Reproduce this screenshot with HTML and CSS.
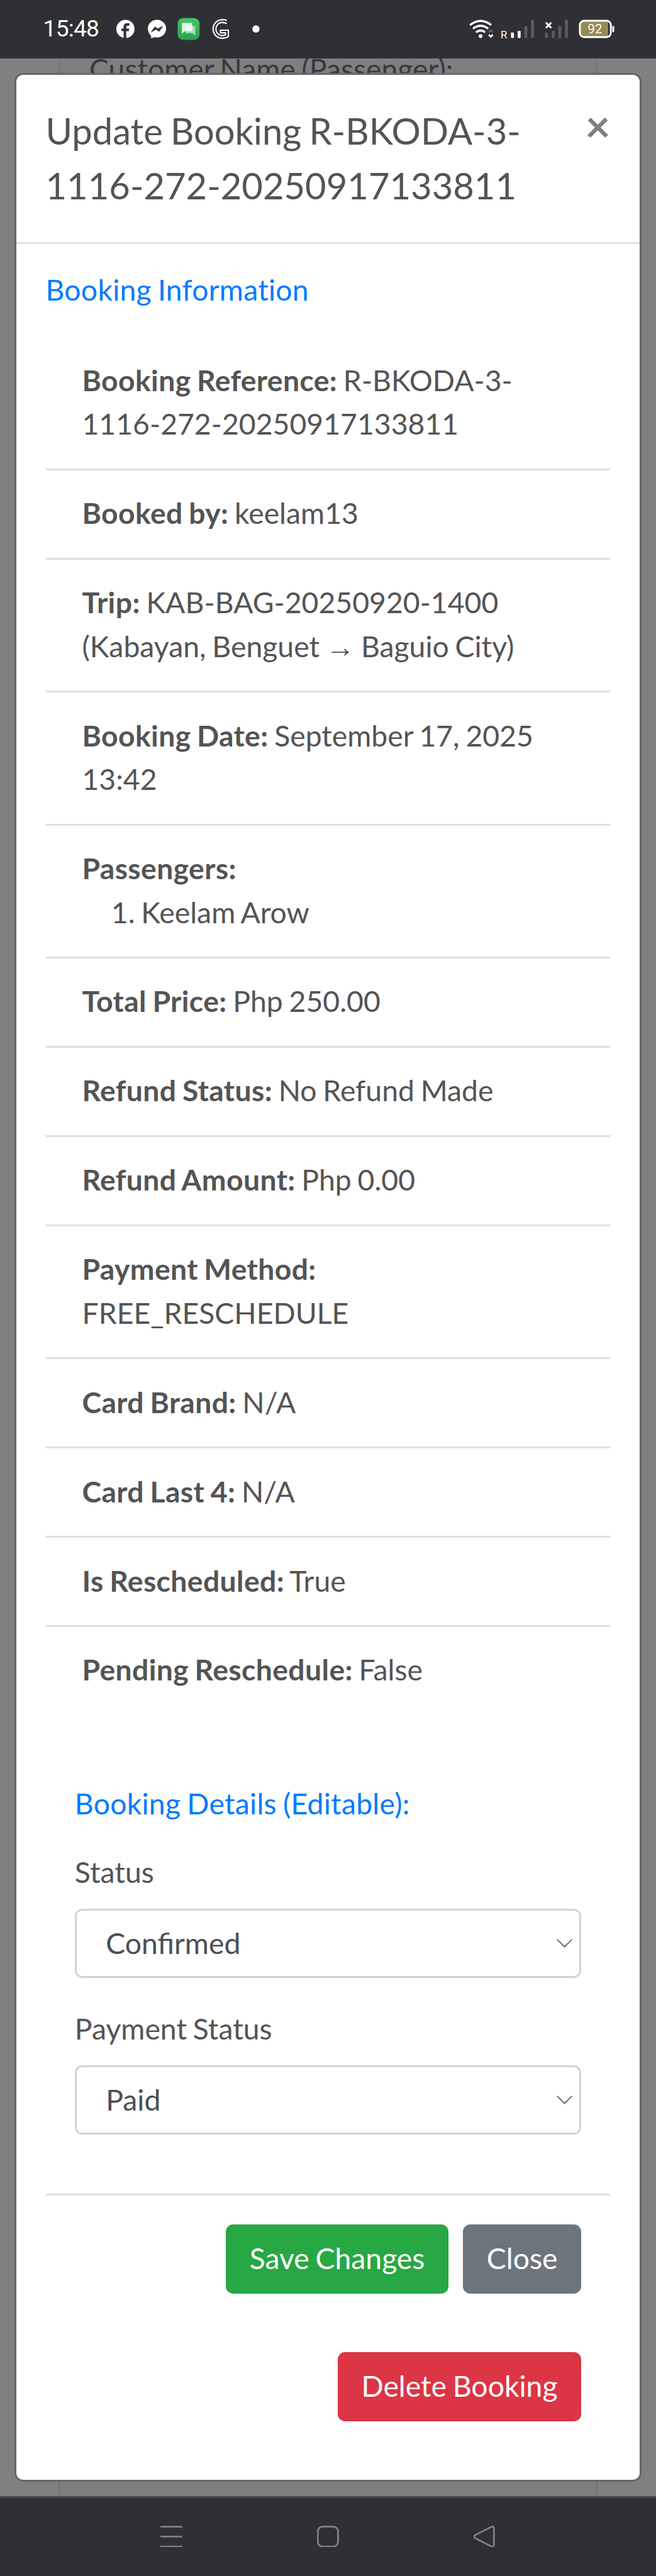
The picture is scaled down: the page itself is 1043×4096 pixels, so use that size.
FILE: index.html
```html
<!DOCTYPE html>
<html lang="en">
<head>
<meta charset="utf-8">
<title>Update Booking</title>
<link rel="stylesheet" href="styles.css">
</head>
<body>
<header class="statusbar">
  <span class="time">15:48</span>
  <svg class="status-left" viewBox="190 20 250 60">
    <defs><linearGradient id="msg" x1="0" y1="0" x2="0" y2="1"><stop offset="0" stop-color="#42c865"/><stop offset="1" stop-color="#2ba24b"/></linearGradient></defs>
    <circle cx="207" cy="48" r="15" fill="#fff"/>
    <path d="M204 64V51.5h-3.5v-4h3.5v-3c0-4 2.300-5.800 5.600-5.800h4v3.800h-2.600c-2 0-2.600.8-2.600 2.400v2.600h4.800l-.7 4h-4.100V64z" fill="#2f3034"/>
    <path d="M259 33c8.500 0 15 6.200 15 14.500S267.500 62 259 62c-1.600 0-3-.2-4.400-.6L249.500 63.600l-.4-4.600c-3.100-2.700-5.100-6.700-5.100-11.500C244 39.200 250.500 33 259 33z" fill="#fff"/>
    <path d="M249.700 52.700l5.500-7.600q.6-.6 1.300-.1l3.800 2.900 8-4.200-5.400 7.700q-.6.800-1.400.2l-3.800-3z" fill="#2f3034" stroke="#2f3034"/>
    <rect x="293" y="30" width="36" height="36" rx="9" fill="url(#msg)"/>
    <path d="M307 43h14q1 0 1 1v14.800l-5-3.800h-10q-1 0-1-1V44q0-1 1-1z" fill="#fff" opacity=".55"/>
    <path d="M301 38h15q1 0 1 1v11.500q0 1-1 1h-11l-5 4V39q0-1 1-1z" fill="#fff" opacity=".85"/>
    <g fill="none" stroke="#fff" stroke-width="2.200">
      <path d="M374 34C371 32.800 368 32.700 365.500 32.700A15.400 15.400 0 0 0 365.500 63.400C370 63.400 374 62.300 376.500 60.600V50H363.500V54.300H371.800V57.700C370 58.700 368 59 365.500 59A11 11 0 0 1 365.500 37.200C368.500 37.200 371.500 37.800 374 39"/>
    </g>
    <circle cx="422" cy="48" r="6" fill="#fff"/>
  </svg>
  <svg class="status-right" viewBox="765 20 255 60">
    <g fill="none" stroke="#fff" stroke-width="3.600">
      <path d="M773.500 41.500Q791 28 808.500 41.500"/>
      <path d="M778.500 47.500Q791 38 803.500 47.500"/>
      <path d="M783.500 53.500Q791 47.500 798.500 53.500"/>
      <path d="M804.500 57.500l3.300 3.300 3.300-3.300" stroke-width="3"/>
      <path d="M804.500 53.500l3.300-3.300 3.300 3.300" stroke="#5b5c5f" stroke-width="3"/>
      <path d="M898.500 37.500l9 9m0-9l-9 9" stroke-width="3"/>
    </g>
    <circle cx="791" cy="60" r="3.100" fill="#fff"/>
    <text x="824" y="63.700" font-size="17.500" fill="#fff">R</text>
    <g fill="#fff">
      <rect x="841" y="54" width="5" height="9" rx="1.500"/><rect x="852" y="51" width="5" height="12" rx="1.500"/>
    </g>
    <g fill="#5a5b5f">
      <rect x="863" y="43" width="5" height="20" rx="1.500"/><rect x="874" y="33" width="5" height="30" rx="1.500"/>
      <rect x="897" y="54" width="5" height="9" rx="1.500"/><rect x="908" y="51" width="5" height="12" rx="1.500"/>
      <rect x="919" y="43" width="5" height="20" rx="1.500"/><rect x="930" y="33" width="5" height="30" rx="1.500"/>
    </g>
    <path d="M961 35H1001V61H961q-6 0-6-6V41q0-6 6-6z" fill="#988a54"/>
    <rect x="954.500" y="34.500" width="51" height="27" rx="7" fill="none" stroke="#fff" stroke-width="3"/>
    <rect x="1008" y="43" width="3" height="10.500" rx="1.200" fill="#fff"/>
    <text x="967.500" y="55.300" font-size="21" fill="#fff">92</text>
  </svg>
</header>

<main class="screen">
  <div class="backdrop"><div class="page-card">Customer Name (Passenger):</div></div>
  <section class="modal">
    <div class="modal-header">
      <h1 class="title">Update Booking R-BKODA-3-<br>1116-272-20250917133811</h1>
      <span class="dismiss">×</span>
    </div>
    <div class="modal-body">
      <h2 class="heading">Booking Information</h2>
      <ul class="info">
        <li class="row tall"><b>Booking Reference:</b> R-BKODA-3-<br>1116-272-20250917133811</li>
        <li class="row"><b>Booked by:</b> keelam13</li>
        <li class="row tall"><b>Trip:</b> KAB-BAG-20250920-1400<br>(Kabayan, Benguet <span class="arrow">→</span> Baguio City)</li>
        <li class="row tall"><b>Booking Date:</b> September 17, 2025<br>13:42</li>
        <li class="row tall"><b>Passengers:</b><div class="passenger">1. Keelam Arow</div></li>
        <li class="row"><b>Total Price:</b> Php 250.00</li>
        <li class="row"><b>Refund Status:</b> No Refund Made</li>
        <li class="row"><b>Refund Amount:</b> Php 0.00</li>
        <li class="row tall"><b>Payment Method:</b><br>FREE_RESCHEDULE</li>
        <li class="row"><b>Card Brand:</b> N/A</li>
        <li class="row"><b>Card Last 4:</b> N/A</li>
        <li class="row"><b>Is Rescheduled:</b> True</li>
        <li class="row"><b>Pending Reschedule:</b> False</li>
      </ul>
      <div class="details">
        <h2 class="heading">Booking Details (Editable):</h2>
        <div class="field">
          <span class="label">Status</span>
          <div class="select">Confirmed<svg class="chevron" viewBox="0 0 26 14"><path d="M.8.800L13 13 25.200.800"/></svg></div>
        </div>
        <div class="field">
          <span class="label">Payment Status</span>
          <div class="select">Paid<svg class="chevron" viewBox="0 0 26 14"><path d="M.8.800L13 13 25.200.800"/></svg></div>
        </div>
      </div>
      <div class="actions">
        <span class="btn save">Save Changes</span>
        <span class="btn close">Close</span>
      </div>
      <div class="danger"><span class="btn delete">Delete Booking</span></div>
    </div>
  </section>
</main>

<nav class="navbar">
  <svg class="nav-icon" viewBox="0 0 36 36"><path d="M0 1.700H36M0 18H36M0 34.300H36"/></svg>
  <svg class="nav-icon" viewBox="0 0 36 36"><rect x="1.300" y="1.500" width="33.400" height="33" rx="8"/></svg>
  <svg class="nav-icon" viewBox="0 0 36 36"><path d="M29 2L2.500 15.500Q-.5 18 2.500 20.500L29 34Q33.500 35.500 33.500 31.500V4.500Q33.500.500 29 2z"/></svg>
</nav>
</body>
</html>
```
FILE: styles.css
```css
html { font-size: 9.655px; }
* { box-sizing: border-box; }
body {
  margin: 0;
  height: 4096px;
  overflow: hidden;
  display: flex;
  flex-direction: column;
  font: 4.8rem/7.2rem Lato, "Liberation Sans", sans-serif;
  word-spacing: -0.22rem;
  color: #545454;
  background: #2f3034;
}

/* Phone status bar */
.statusbar {
  height: 9.6rem;
  flex: none;
  display: flex;
  align-items: flex-start;
  padding: 2rem 6rem 0 7.1rem;
  font-family: Roboto, sans-serif;
  color: #fff;
}
.time { width: 11.9rem; font-size: 3.85rem; line-height: 5.6rem; letter-spacing: -0.08rem; white-space: nowrap; }
.status-left { width: 25rem; height: 6rem; }
.status-right { width: 25.5rem; height: 6rem; margin-left: auto; }

/* Dimmed page behind the dialog */
.screen {
  position: relative;
  flex: none;
  height: 401.5rem;
  padding: 2.4rem;
  overflow: hidden;
  background: #808080;
}
.backdrop { position: absolute; inset: 0; padding: 0 9.6rem; }
.page-card {
  margin-top: -1.8rem;
  height: 420rem;
  padding-left: 4.8rem;
  border: solid #747576;
  border-width: 0 3px;
  background: #7e7e7e;
  color: #343a40;
  white-space: nowrap;
}

.modal {
  position: relative;
  height: 396.7rem;
  border: 3px solid #666;
  border-radius: 1.45rem;
  background: #fff;
}
.modal-header {
  height: 27.9rem;
  display: flex;
  justify-content: space-between;
  padding: 4.8rem 4.8rem 0;
  border-bottom: 3px solid #dee2e6;
}
.title { margin: 0; font-size: 6rem; font-weight: 400; line-height: 9rem; word-spacing: -0.28rem; white-space: nowrap; }
.dismiss { font-size: 7.2rem; font-weight: 700; line-height: 7.2rem; color: #7f7f7f; }
.modal-body { padding: 4.65rem 4.8rem 0; }
.heading { margin: 0; font-size: 4.8rem; line-height: 5.76rem; font-weight: 400; letter-spacing: 0.025rem; color: #007bff; }

/* Read-only booking facts */
.info { margin: 4.95rem 0 0; padding: 0; list-style: none; }
.row { height: 14.7rem; padding: 3.45rem 6rem 0; border-bottom: 3px solid #dfdfdf; white-space: nowrap; }
.row b { letter-spacing: 0.038rem; }
.tall { height: 21.9rem; }
.row:last-child { height: 14.4rem; border: 0; }
.passenger { padding-left: 4.8rem; }
.arrow { font-family: "Liberation Serif", serif; }

/* Editable fields */
.details { height: 78.9rem; padding: 11.8rem 4.8rem 0; }
.field { display: flex; flex-direction: column; gap: 2.4rem; margin-top: 4.8rem; }
.select {
  height: 11.4rem;
  display: flex;
  align-items: center;
  justify-content: space-between;
  padding: 0 1.1rem 0 4.8rem;
  border: 3px solid #ced4da;
  border-radius: 1.2rem;
  color: #495057;
}
.chevron { width: 2.6rem; height: 1.4rem; fill: none; stroke: #495057; stroke-width: 1.6; }

.actions {
  display: flex;
  justify-content: flex-end;
  gap: 2.4rem;
  padding: 4.8rem 4.8rem 0;
  border-top: 3px solid #dee2e6;
}
.danger { display: flex; justify-content: flex-end; padding: 9.6rem 4.8rem 0; }
.btn { height: 11.4rem; padding: 0 3.9rem; border-radius: 1.2rem; line-height: 11.1rem; color: #fff; white-space: nowrap; }
.save { background: #28a745; }
.close { background: #6c757d; }
.delete { background: #dc3545; }

/* Phone navigation bar */
.navbar {
  flex: 1;
  display: flex;
  justify-content: center;
  gap: 22.2rem;
  padding-top: 4.5rem;
  border-top: 3px solid #454646;
}
.nav-icon { width: 3.6rem; height: 3.6rem; fill: none; stroke: #7d7e80; stroke-width: 3; }
```
